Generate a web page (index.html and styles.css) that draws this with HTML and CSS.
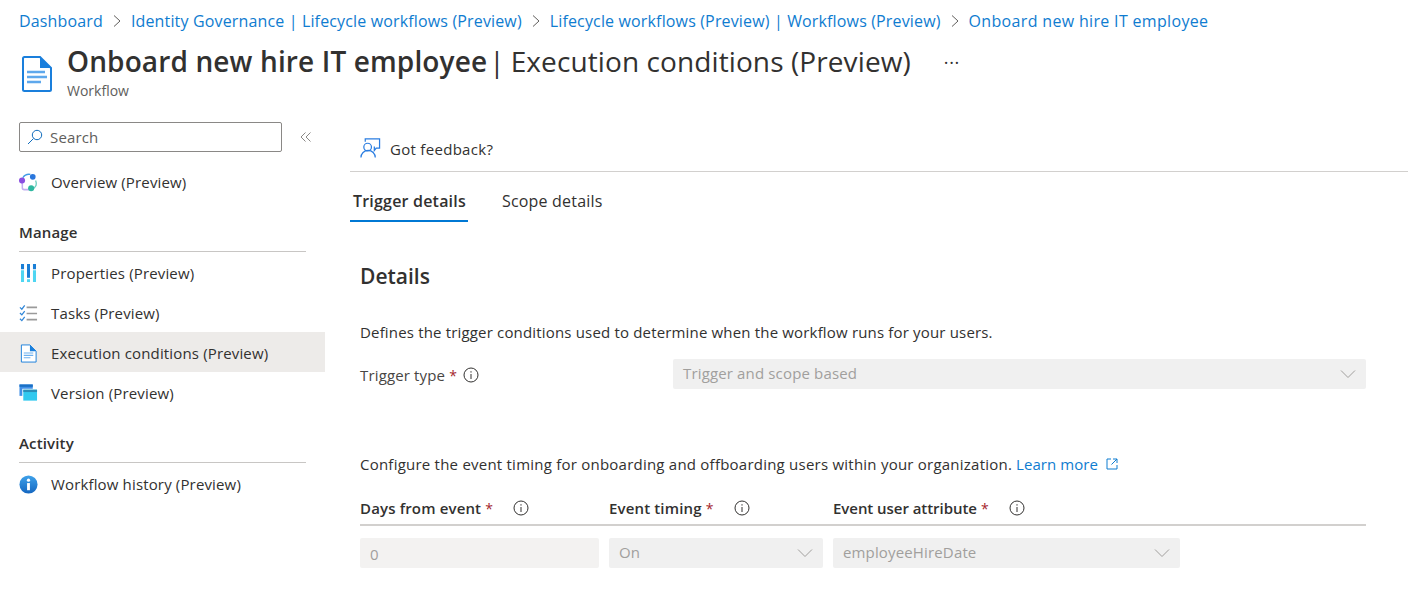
FILE: index.html
```html
<!DOCTYPE html>
<html lang="en">
<head>
<meta charset="utf-8">
<title>Execution conditions</title>
<link rel="stylesheet" href="styles.css">
</head>
<body>
<nav class="crumbs">
  <a href="#">Dashboard</a><svg class="sep" viewBox="0 0 10 14"><path d="M2 1.500 8 7 2 12.500"/></svg>
  <a href="#">Identity Governance | Lifecycle workflows (Preview)</a><svg class="sep" viewBox="0 0 10 14"><path d="M2 1.500 8 7 2 12.500"/></svg>
  <a href="#">Lifecycle workflows (Preview) | Workflows (Preview)</a><svg class="sep" viewBox="0 0 10 14"><path d="M2 1.500 8 7 2 12.500"/></svg>
  <a class="last" href="#">Onboard new hire IT employee</a>
</nav>
<header class="title-row">
  <svg class="doc-big" viewBox="0 0 30 36">
    <path d="M1 2.500A1.500 1.500 0 0 1 2.500 1H18l11 11v21.500a1.500 1.500 0 0 1-1.500 1.500H2.500A1.500 1.500 0 0 1 1 33.500Z" fill="#fff" stroke="#1a7fdc" stroke-width="2"/>
    <path d="M18 1v11h11Z" fill="#1a7fdc"/>
    <path d="M5 16h18M5 21h20M5 26h14" stroke="#5ea8ec" stroke-width="2.400" fill="none"/>
  </svg>
  <div class="title-text">
    <h1><b>Onboard new hire IT employee</b><span class="pipe">|</span>Execution conditions (Preview)</h1>
    <div class="subtitle">Workflow</div>
  </div>
  <div class="more">···</div>
</header>
<div class="main">
  <aside class="side">
    <div class="search-row">
      <div class="search">
        <svg class="ic-search" viewBox="0 0 16 16"><circle cx="10" cy="6" r="4.700"/><path d="M6.500 9.500 1 15"/></svg>
        <span>Search</span>
      </div>
      <svg class="collapse" viewBox="0 0 12 12"><path d="M5.500 1.500 1 6l4.500 4.500M10.500 1.500 6 6l4.500 4.500"/></svg>
    </div>
    <a class="item" href="#">
      <svg class="ic" viewBox="0 0 20 20">
        <path d="M4 5A8 8 0 0 1 12 1.500" fill="none" stroke="#3f9be6" stroke-width="1.400"/>
        <path d="M17.500 8a8 8 0 0 1 .5 5 6 6 0 0 1-2.500 3" fill="none" stroke="#6fcfc0" stroke-width="1.400"/>
        <path d="M3.500 11v4.500a2 2 0 0 0 2 2h5" fill="none" stroke="#c3aef0" stroke-width="1.600"/>
        <circle cx="14.500" cy="4" r="3" fill="#2a76dc"/><circle cx="3.200" cy="8" r="3.200" fill="#8a4fe0"/><circle cx="12.800" cy="16" r="3.200" fill="#2fb8a0"/>
      </svg>
      Overview (Preview)
    </a>
    <h2 class="group">Manage</h2>
    <a class="item" href="#">
      <svg class="ic" viewBox="0 0 20 20">
        <path d="M2.100 0h3.200v5.500H2.100ZM14.700 0h3.200v5.500h-3.200Z" fill="#1a7fd6"/>
        <path d="M2.100 6.500h3.200V19H2.100ZM14.700 6.500h3.200V19h-3.200Z" fill="#4fd6f2"/>
        <path d="M8.400 0h3.200v14.500H8.400Z" fill="#1a7fd6"/>
        <path d="M8.400 16h3.200v3H8.400Z" fill="#4fd6f2"/>
      </svg>
      Properties (Preview)
    </a>
    <a class="item" href="#">
      <svg class="ic" viewBox="0 0 20 20">
        <path d="M1 3.500 3 5.500 6 1.500M1 9.500 3 11.500 6 7.500M1 15.500 3 17.500 6 13.500" fill="none" stroke="#2f86d8" stroke-width="1.300"/>
        <path d="M8 3.500h11M8 10h11M8 16.500h11" stroke="#9a9a9a" stroke-width="1.700"/>
      </svg>
      Tasks (Preview)
    </a>
    <a class="item active" href="#">
      <svg class="ic" viewBox="0 0 20 20">
        <path d="M2.500 1h9L18 7.500V19H2.500Z" fill="#fff" stroke="#1a7fdc" stroke-width="1"/>
        <path d="M11.500 1v6.500H18Z" fill="#1a7fdc"/>
        <path d="M5 9.500h10M5 12h10M5 14.500h7" stroke="#6db0ee" stroke-width="1.200"/>
      </svg>
      Execution conditions (Preview)
    </a>
    <a class="item" href="#">
      <svg class="ic" viewBox="0 0 20 20">
        <path d="M0.500 0.500h14v12h-14Z" fill="#3f8fe6"/><path d="M0.500 0.500h14v2.500h-14Z" fill="#1a6fc4"/>
        <path d="M3.500 5h15.500v12.500H3.500Z" fill="#fff"/>
        <path d="M4.500 6h14.500v11.500H4.500Z" fill="#31c9ef"/><path d="M4.500 6h14.500v2.500H4.500Z" fill="#2a8eb8"/>
      </svg>
      Version (Preview)
    </a>
    <h2 class="group">Activity</h2>
    <a class="item" href="#">
      <svg class="ic" viewBox="0 0 20 20">
        <defs><linearGradient id="ib" x1="0" x2="0" y1="0" y2="1"><stop offset="0" stop-color="#3fa2ea"/><stop offset="1" stop-color="#1466c0"/></linearGradient></defs>
        <circle cx="10" cy="10" r="9.500" fill="url(#ib)"/>
        <path d="M8.500 8.500h3V16h-3Z" fill="#fff"/><circle cx="10" cy="5.500" r="1.700" fill="#fff"/>
      </svg>
      Workflow history (Preview)
    </a>
  </aside>
  <main class="content">
    <div class="toolbar">
      <svg class="ic-fb" viewBox="0 0 22 22">
        <circle cx="8" cy="9.500" r="4"/><path d="M1 20.500a7.500 7.500 0 0 1 15 0"/><path d="M5.500 4V1H20.500V10.500H17L15 13V9"/>
      </svg>
      <span>Got feedback?</span>
    </div>
    <div class="tabs">
      <a class="tab on" href="#">Trigger details</a>
      <a class="tab" href="#">Scope details</a>
    </div>
    <div class="pane">
      <h3>Details</h3>
      <p class="desc">Defines the trigger conditions used to determine when the workflow runs for your users.</p>
      <div class="trigger-row">
        <label class="trigger-label">Trigger type <span class="req">*</span>
          <svg class="info" viewBox="0 0 16 16"><circle cx="8" cy="8" r="7"/><path d="M8 7v5M8 4.200v1.400"/></svg>
        </label>
        <div class="field wide"><span>Trigger and scope based</span><svg class="chev" viewBox="0 0 16 10"><path d="M1 1.500 8 8.500 15 1.500"/></svg></div>
      </div>
      <p class="timing">Configure the event timing for onboarding and offboarding users within your organization. <a href="#">Learn more</a>
        <svg class="ext" viewBox="0 0 12 12"><path d="M5 1H1v10h10V7M7 1h4v4M11 1 5.500 6.500"/></svg>
      </p>
      <div class="grid head">
        <div class="th">Days from event <span class="req">*</span><svg class="info" viewBox="0 0 16 16"><circle cx="8" cy="8" r="7"/><path d="M8 7v5M8 4.200v1.400"/></svg></div>
        <div class="th">Event timing <span class="req">*</span><svg class="info" viewBox="0 0 16 16"><circle cx="8" cy="8" r="7"/><path d="M8 7v5M8 4.200v1.400"/></svg></div>
        <div class="th tight">Event user attribute <span class="req">*</span><svg class="info" viewBox="0 0 16 16"><circle cx="8" cy="8" r="7"/><path d="M8 7v5M8 4.200v1.400"/></svg></div>
      </div>
      <div class="grid body">
        <div class="field soft"><span class="num">0</span></div>
        <div class="field"><span>On</span><svg class="chev" viewBox="0 0 16 10"><path d="M1 1.500 8 8.500 15 1.500"/></svg></div>
        <div class="field"><span>employeeHireDate</span><svg class="chev" viewBox="0 0 16 10"><path d="M1 1.500 8 8.500 15 1.500"/></svg></div>
      </div>
    </div>
  </main>
</div>
</body>
</html>
```
FILE: styles.css
```css
* { box-sizing: border-box; }
html, body { margin: 0; padding: 0; }
body {
  font-family: "Open Sans", "Noto Sans", sans-serif;
  font-size: 15px;
  letter-spacing: 0.15px;
  color: #323130;
  background: #fff;
  height: 601px;
  overflow: hidden;
}
a { text-decoration: none; color: inherit; }
.crumbs {
  display: flex;
  align-items: center;
  height: 42px;
  padding-left: 19px;
  font-size: 16px;
  letter-spacing: 0.15px;
  color: #0078d4;
}
.crumbs a { color: #0f7cd0; }
.crumbs .last { letter-spacing: 0.33px; }
.sep { width: 10px; height: 14px; margin: 0 9px; fill: none; stroke: #605e5c; stroke-width: 1; }
.title-row { display: flex; height: 60px; padding-left: 22px; align-items: flex-start; }
.doc-big { width: 30px; height: 36px; margin-top: 14px; margin-right: 15px; flex: none; }
.title-text { display: flex; flex-direction: column; }
h1 {
  margin: -1px 0 0;
  font-size: 28px;
  line-height: 40px;
  font-weight: 400;
  letter-spacing: 0.1px;
  white-space: nowrap;
  color: #323130;
}
h1 b { font-weight: 600; letter-spacing: 0.13px; }
.pipe { margin: 0 6px 0 2px; }
.subtitle { font-size: 14px; line-height: 18px; letter-spacing: 0; color: #605e5c; margin-top: 1px; }
.more { margin-left: 33px; margin-top: 9px; font-size: 18px; letter-spacing: 0.6px; color: #323130; line-height: 22px; }
.main { display: flex; }
.side { width: 325px; flex: none; padding-top: 20px; }
.search-row { display: flex; align-items: center; height: 30px; padding-left: 19px; margin-bottom: 10px; }
.search {
  width: 263px;
  height: 30px;
  border: 1px solid #8a8886;
  border-radius: 2px;
  display: flex;
  align-items: center;
  gap: 7px;
  padding-left: 7px;
  color: #605e5c;
}
.ic-search { width: 16px; height: 16px; fill: none; stroke: #0f6cbd; stroke-width: 1; }
.collapse { width: 12px; height: 12px; margin-left: 18px; fill: none; stroke: #8a8886; stroke-width: 1; }
.item {
  display: flex;
  align-items: center;
  height: 40px;
  padding-left: 19px;
  gap: 13px;
  color: #323130;
}
.item.active { background: #edebe9; margin: -1px 0 1px; padding-top: 2px; }
.ic { width: 19px; height: 19px; flex: none; }
.group {
  margin: 10px 19px 1px;
  font-size: 15px;
  font-weight: 600;
  line-height: 41px;
  height: 40px;
  border-bottom: 1px solid #c8c6c4;
  color: #323130;
}
.content { flex: 1; margin-left: 25px; padding-top: 26px; min-width: 0; }
.toolbar {
  display: flex;
  align-items: center;
  height: 44px;
  padding: 0 0 2px 10px;
  gap: 9px;
  border-bottom: 1px solid #d2d0ce;
  letter-spacing: 0.3px;
}
.ic-fb { width: 21px; height: 21px; fill: none; stroke: #2a7de1; stroke-width: 1.300; }
.tabs { display: flex; gap: 31px; height: 50px; }
.tab {
  display: flex;
  align-items: center;
  padding: 10px 2px 0 3px;
  font-size: 16px;
  letter-spacing: 0.2px;
  border-bottom: 2px solid transparent;
}
.tab.on { font-weight: 600; border-bottom-color: #0078d4; }
.pane { padding: 0 42px 0 10px; }
h3 { margin: 40px 0 0; font-size: 21px; line-height: 28px; font-weight: 600; letter-spacing: 0; }
.desc { margin: 32px 0 0; line-height: 20px; letter-spacing: 0.17px; }
.trigger-row { display: flex; align-items: center; margin-top: 17px; }
.trigger-label { width: 313px; flex: none; display: flex; align-items: center; color: #484644; gap: 4px; padding-top: 2px; }
.req { color: #a4262c; font-weight: 400; font-size: 14px; }
.info { width: 16px; height: 16px; fill: none; stroke: #323130; stroke-width: 1; flex: none; }
.trigger-label .info { margin-left: 2px; }
.field {
  height: 30px;
  background: #f0f0f0;
  border-radius: 2px;
  display: flex;
  align-items: center;
  justify-content: space-between;
  padding: 0 10px;
  color: #a19f9d;
}
.field span { padding-bottom: 2px; }
.soft { background: #f3f2f1; }
.wide { flex: 1; }
.chev { width: 16px; height: 10px; fill: none; stroke: #a19f9d; stroke-width: 1; flex: none; }
.timing { margin: 65px 0 0; line-height: 20px; display: flex; align-items: center; gap: 4px; letter-spacing: 0.23px; }
.timing a { color: #0f7cd0; letter-spacing: 0.05px; }
.ext { width: 12px; height: 12px; margin-left: 4px; fill: none; stroke: #0f7cd0; stroke-width: 1; }
.grid { display: grid; grid-template-columns: 239px 214px 347px; column-gap: 10px; }
.head { margin-top: 16px; height: 36px; border-bottom: 2px solid #d2d0ce; align-items: center; }
.th { font-weight: 600; display: flex; align-items: center; gap: 4px; padding-top: 2px; }
.th.tight { letter-spacing: -0.05px; }
.th .info { margin-left: 16px; }
.body { margin-top: 12px; }
.field .num { padding: 1px 0 0; }
```
